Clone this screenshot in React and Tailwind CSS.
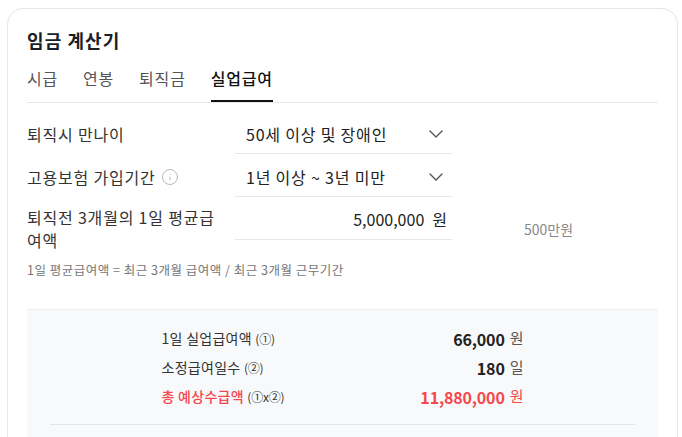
import { ChevronDown, Info } from "lucide-react";

const tabs = ["시급", "연봉", "퇴직금", "실업급여"];

function SelectBox({ value }) {
	return (
		<div className="w-[217px] h-[43px] flex items-center justify-between pl-[11px] pr-[4px] pt-[3px] border-b border-[#e8e8e8] text-[16px] tracking-[0.05em] text-[#222]">
			<span>{value}</span>
			<ChevronDown size={24} strokeWidth={1.4} className="text-[#555]" />
		</div>
	);
}

function ResultRow({ label, note, value, unit, red }) {
	return (
		<div className="flex items-center justify-between h-[29px]">
			<span className={`text-[14px] tracking-[0.02em] ${red ? "text-[#f5474d] font-medium" : "text-[#333]"}`}>
				{label} <span className="text-[12px] tracking-[-0.02em] text-[#333] font-normal">{note}</span>
			</span>
			<span className="flex items-center gap-[5px]">
				<span className={`text-[16px] font-bold tracking-[-0.01em] ${red ? "text-[#f5474d]" : "text-[#222]"}`}>{value}</span>
				<span className={`text-[15px] ${red ? "text-[#f5474d]" : "text-[#555]"}`}>{unit}</span>
			</span>
		</div>
	);
}

export default function App() {
	return (
		<div className="min-h-screen bg-white pl-[7px] pr-[4px] pt-[8px] font-['Noto_Sans_CJK_KR','Noto_Sans',sans-serif]">
			<div className="rounded-[16px] border border-[#e6e6e6] px-[19px] pt-[18px] pb-[40px]">
				<h1 className="text-[18px] leading-[26px] font-bold tracking-[0.06em] text-[#191f28]">임금 계산기</h1>

				<div className="mt-[13px] flex gap-[25px] border-b border-[#e8e8e8]">
					{tabs.map((t, i) => (
						<button
							key={t}
							type="button"
							className={`h-[36px] pb-[12px] text-[16px] leading-[24px] tracking-[0.05em] ${
								i === 3 ? "text-[#111] font-medium border-b-2 border-[#111] -mb-px" : "text-[#555]"
							}`}
						>
							{t}
						</button>
					))}
				</div>

				<div className="mt-[8px] tracking-[0.05em]">
					<div className="flex items-center h-[43px]">
						<span className="w-[208px] pt-[3px] text-[16px] text-[#333]">퇴직시 만나이</span>
						<SelectBox value="50세 이상 및 장애인" />
					</div>
					<div className="flex items-center h-[43px]">
						<span className="w-[208px] pt-[3px] text-[16px] text-[#333] flex items-center gap-[5px]">
							고용보험 가입기간
							<Info size={18} strokeWidth={1.1} className="text-[#aaa]" />
						</span>
						<SelectBox value="1년 이상 ~ 3년 미만" />
					</div>
					<div className="flex h-[64px]">
						<span className="w-[208px] pt-[9px] text-[16px] leading-[23px] text-[#333]">
							퇴직전 3개월의 1일 평균급
							<br />
							여액
						</span>
						<div className="w-[217px] h-[43px] flex items-center justify-end gap-[8px] pr-[5px] pt-[2px] border-b border-[#e8e8e8] text-[16px] tracking-normal text-[#222]">
							<span>5,000,000</span>
							<span>원</span>
						</div>
						<span className="self-center ml-[72px] text-[14px] tracking-normal text-[#888]">500만원</span>
					</div>
					<p className="mt-[1px] text-[12.5px] leading-[16px] tracking-[0.04em] text-[#777]">
						1일 평균급여액 = 최근 3개월 급여액 / 최근 3개월 근무기간
					</p>
				</div>

				<div className="mt-[31px] bg-[#f8f9fa] border-t border-[#eeeeee] pt-[14px] pb-[20px]">
					<div className="w-[362px] mx-auto">
						<ResultRow label="1일 실업급여액" note="(①)" value="66,000" unit="원" />
						<ResultRow label="소정급여일수" note="(②)" value="180" unit="일" />
						<ResultRow label="총 예상수급액" note="(①x②)" value="11,880,000" unit="원" red />
					</div>
					<div className="mx-[23px] mt-[13px] border-t border-[#e5e5e5]" />
					<div className="h-[40px]" />
				</div>
			</div>
		</div>
	);
}
